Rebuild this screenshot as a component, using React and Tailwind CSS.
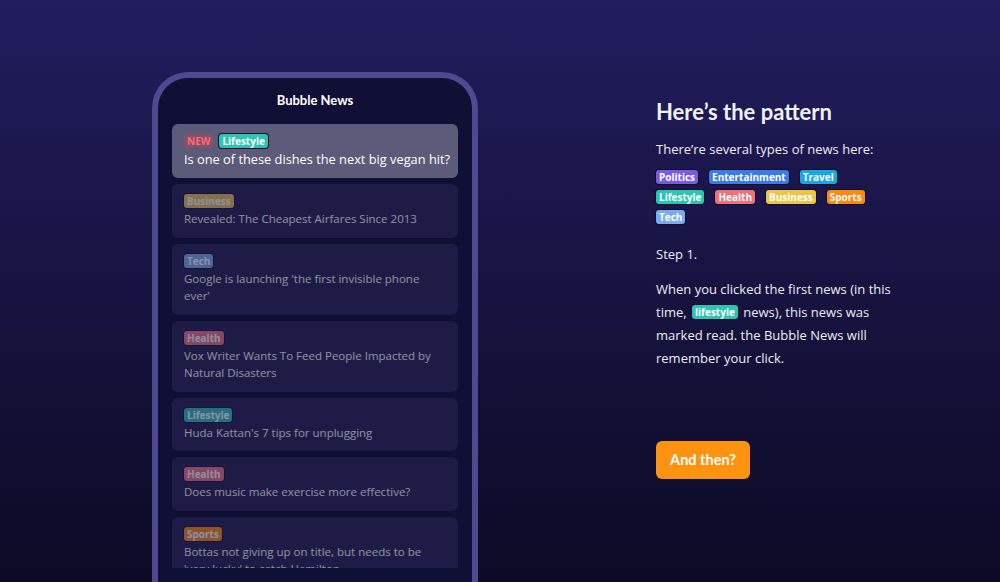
import React from "react";

const TAG_COLORS = {
  Politics: "bg-[#7b5ce0]",
  Entertainment: "bg-[#3c7be3]",
  Travel: "bg-[#17a8e6]",
  Lifestyle: "bg-[#2ec4b4]",
  Health: "bg-[#f0707c]",
  Business: "bg-[#ebc64a]",
  Sports: "bg-[#fc8a12]",
  Tech: "bg-[#78aef0]",
};

const NEWS = [
  { tag: "Business", title: "Revealed: The Cheapest Airfares Since 2013" },
  { tag: "Tech", title: "Google is launching 'the first invisible phone ever'" },
  { tag: "Health", title: "Vox Writer Wants To Feed People Impacted by Natural Disasters" },
  { tag: "Lifestyle", title: "Huda Kattan's 7 tips for unplugging" },
  { tag: "Health", title: "Does music make exercise more effective?" },
  { tag: "Sports", title: "Bottas not giving up on title, but needs to be 'very lucky' to catch Hamilton" },
];

function Tag({ name, label }) {
  return (
    <span
      className={`inline-flex h-[14px] items-center rounded-[3px] px-[3px] font-['Open_Sans'] text-[10px] font-bold leading-none text-white ring-1 ring-[#0f0d30] ${TAG_COLORS[name]}`}
    >
      {label || name}
    </span>
  );
}

function Phone() {
  return (
    <div className="mt-[72px] h-[540px] w-[326px] shrink-0 rounded-t-[36px] border-[6px] border-b-0 border-[#4f4991] bg-[#100f36] px-[14px]">
      <div className="flex h-[46px] items-center justify-center font-['Lato'] text-[13px] font-bold text-white">
        Bubble News
      </div>
      <div className="flex h-[444px] flex-col gap-[6px] overflow-hidden font-['Open_Sans']">
        <div className="shrink-0 rounded-md bg-[#5c5b7a] pt-[10px] pr-[4px] pb-[10px] pl-3">
          <div className="mb-[2px] flex h-[14px] items-center gap-[6px]">
            <span className="inline-flex h-[14px] items-center rounded-[3px] bg-[#84506c] px-[3px] text-[10px] font-bold leading-none text-[#ff6b6f]">
              NEW
            </span>
            <Tag name="Lifestyle" />
          </div>
          <p className="whitespace-nowrap text-[12.8px] leading-[18px] text-white">
            Is one of these dishes the next big vegan hit?
          </p>
        </div>
        {NEWS.map((n, i) => (
          <div key={i} className="shrink-0 rounded-md bg-[#1e1c46] px-3 pt-[10px] pb-[10px]">
            <div className="opacity-50">
              <div className="mb-[2px] flex h-[14px] items-center">
                <Tag name={n.tag} />
              </div>
              <p className="text-[11.5px] leading-[17.5px] text-white">{n.title}</p>
            </div>
          </div>
        ))}
      </div>
    </div>
  );
}

export default function App() {
  return (
    <div className="flex h-[582px] w-full overflow-hidden bg-gradient-to-b from-[#221d5e] to-[#0c0a25] pl-[152px]">
      <Phone />
      <div className="ml-[178px] w-[245px] pt-[99px] font-['Open_Sans'] text-[#ececf4]">
        <h2 className="font-['Lato'] text-[22px] font-bold leading-[26px] text-[#f0f0f6]">Here’s the pattern</h2>
        <p className="mt-[14px] text-[13px] leading-[20px]">There’re several types of news here:</p>
        <div className="mt-[11px] flex w-[215px] flex-wrap gap-x-[11px] gap-y-[6px]">
          {["Politics", "Entertainment", "Travel", "Lifestyle", "Health", "Business", "Sports", "Tech"].map((t) => (
            <Tag key={t} name={t} />
          ))}
        </div>
        <p className="mt-[20px] text-[13px] leading-[20px]">Step 1.</p>
        <p className="mt-[14px] w-[240px] text-[13px] leading-[23px]">
          When you clicked the first news (in this time,{" "}
          <span className="mx-[2px] inline-flex align-[1px]">
            <Tag name="Lifestyle" label="lifestyle" />
          </span>{" "}
          news), this news was marked read. the Bubble News will remember your click.
        </p>
        <button
          type="button"
          className="mt-[71px] h-[38px] w-[94px] rounded-md bg-[#fe930f] font-['Lato'] text-[14.5px] font-bold text-white"
        >
          And then?
        </button>
      </div>
    </div>
  );
}
